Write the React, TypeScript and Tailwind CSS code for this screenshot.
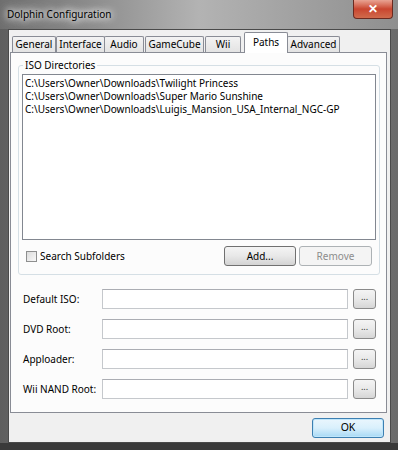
import React from "react";

const font = { fontFamily: '"Noto Sans", "Segoe UI", sans-serif' };

function Tab({ label, selected, w, ml = 0 }: { label: string; selected?: boolean; w: number; ml?: number }) {
  if (selected) {
    return (
      <div
        className="relative z-10 -mb-px flex h-[21px] items-start justify-center self-end rounded-t-[2px] border border-b-0 border-[#898c95] bg-white pt-[2px] text-[10px] text-black"
        style={{ width: w, marginLeft: ml }}
      >
        {label}
      </div>
    );
  }
  return (
    <div
      className="flex h-[16px] items-center justify-center self-end rounded-t-[2px] border border-b-0 border-[#898c95] bg-gradient-to-b from-[#f3f3f3] to-[#e3e3e3] text-[10px] text-black"
      style={{ width: w, marginLeft: ml }}
    >
      {label}
    </div>
  );
}

function WinButton({ children, disabled, w }: { children: React.ReactNode; disabled?: boolean; w: number }) {
  return (
    <div
      className={
        "flex h-[20px] items-center justify-center rounded-[3px] border text-[10px] " +
        (disabled
          ? "border-[#adb2b5] bg-[#f4f4f4] text-[#8d8d8d]"
          : "border-[#707070] bg-gradient-to-b from-[#f4f4f4] via-[#e8e8e8] to-[#d3d3d3] text-black")
      }
      style={{ width: w }}
    >
      {children}
    </div>
  );
}

function PathRow({ label }: { label: string }) {
  return (
    <div className="flex h-[20px] items-center">
      <div className="w-[91px] whitespace-nowrap pl-[12px] text-[10px] text-black">{label}</div>
      <div className="h-[20px] w-[246px] border border-[#c5c8cc] border-t-[#abadb3] bg-white" />
      <div className="ml-[5px] flex h-[20px] w-[23px] items-start justify-center rounded-[3px] border border-[#8a8a8a] bg-gradient-to-b from-[#f4f4f4] via-[#e9e9e9] to-[#d6d6d6] text-[9px] leading-[14px] text-[#333]">
        ...
      </div>
    </div>
  );
}

export default function App() {
  return (
    <div
      className="flex h-[450px] w-[398px] flex-col overflow-hidden bg-gradient-to-r from-[#5e5e5e] via-[#8e8e8e] to-[#6a6a6a]"
      style={font}
    >
      {/* title bar */}
      <div className="flex h-[29px] items-start justify-between bg-gradient-to-r from-[#6e6e6e] via-[#b3b3b3] to-[#8f8f8f] pl-[7px] pr-[5px]">
        <div
          className="mt-[7px] text-[10px] text-black"
          style={{ textShadow: "0 0 6px #fff, 0 0 10px #fff, 0 0 14px #eee" }}
        >
          Dolphin Configuration
        </div>
        <div className="flex h-[19px] w-[40px] items-center justify-center rounded-b-[4px] border border-t-0 border-[#6b2a20] bg-gradient-to-b from-[#e8a393] via-[#c9452f] to-[#d06a4c] text-[12px] font-bold leading-none text-white">
          ✕
        </div>
      </div>

      {/* client area */}
      <div className="ml-[8px] mr-[7px] flex h-[414px] flex-col border border-[#4a4a4a] bg-[#f0f0f0]">
        {/* tabs */}
        <div className="mt-[2px] flex h-[20px] items-end">
          <Tab label="General" w={44} ml={3} />
          <Tab label="Interface" w={49} ml={0} />
          <Tab label="Audio" w={40} ml={-1} />
          <Tab label="GameCube" w={59} ml={1} />
          <Tab label="Wii" w={36} ml={1} />
          <Tab label="Paths" w={44} selected ml={3} />
          <Tab label="Advanced" w={53} ml={-1} />
        </div>

        {/* panel */}
        <div className="ml-[1px] flex h-[361px] w-[377px] flex-col border border-[#898c95] bg-[#fcfcfc]">
          {/* group box */}
          <div className="relative ml-[7px] mt-[12px] flex h-[210px] w-[362px] flex-col rounded-[3px] border border-[#d5dfe5] px-[3px] pt-[8px]">
            <div className="absolute -top-[8px] left-[4px] bg-[#fcfcfc] px-[2px] text-[10px] text-black">
              ISO Directories
            </div>
            <div className="h-[166px] w-[354px] border border-[#828790] bg-white pt-[2px] pl-[2px] text-[10px] leading-[13px] text-black">
              <div>C:\Users\Owner\Downloads\Twilight Princess</div>
              <div>C:\Users\Owner\Downloads\Super Mario Sunshine</div>
              <div>C:\Users\Owner\Downloads\Luigis_Mansion_USA_Internal_NGC-GP</div>
            </div>
            <div className="mt-[6px] flex h-[20px] items-center">
              <div className="ml-[4px] h-[11px] w-[11px] border border-[#8e8f8f] bg-gradient-to-br from-[#dcdcdc] to-[#f8f8f8]" />
              <div className="ml-[3px] text-[10px] text-black">Search Subfolders</div>
              <div className="flex-1" />
              <WinButton w={72}>Add...</WinButton>
              <div className="w-[3px]" />
              <WinButton w={73} disabled>
                Remove
              </WinButton>
              <div className="w-[4px]" />
            </div>
          </div>

          <div className="mt-[14px] flex flex-col gap-[10px]">
            <PathRow label="Default ISO:" />
            <PathRow label="DVD Root:" />
            <PathRow label="Apploader:" />
            <PathRow label="Wii NAND Root:" />
          </div>
        </div>

        {/* bottom buttons */}
        <div className="mt-[5px] flex justify-end pr-[6px]">
          <div className="flex h-[20px] w-[72px] items-center justify-center rounded-[3px] border border-[#3c7fb1] bg-gradient-to-b from-[#eaf6fd] via-[#d9f0fc] to-[#a7d9f5] text-[10.5px] text-black shadow-[inset_0_0_0_1px_#bfe6fb]">
            OK
          </div>
        </div>
      </div>
      <div className="flex-1 bg-[#3a3a3a]" />
    </div>
  );
}
